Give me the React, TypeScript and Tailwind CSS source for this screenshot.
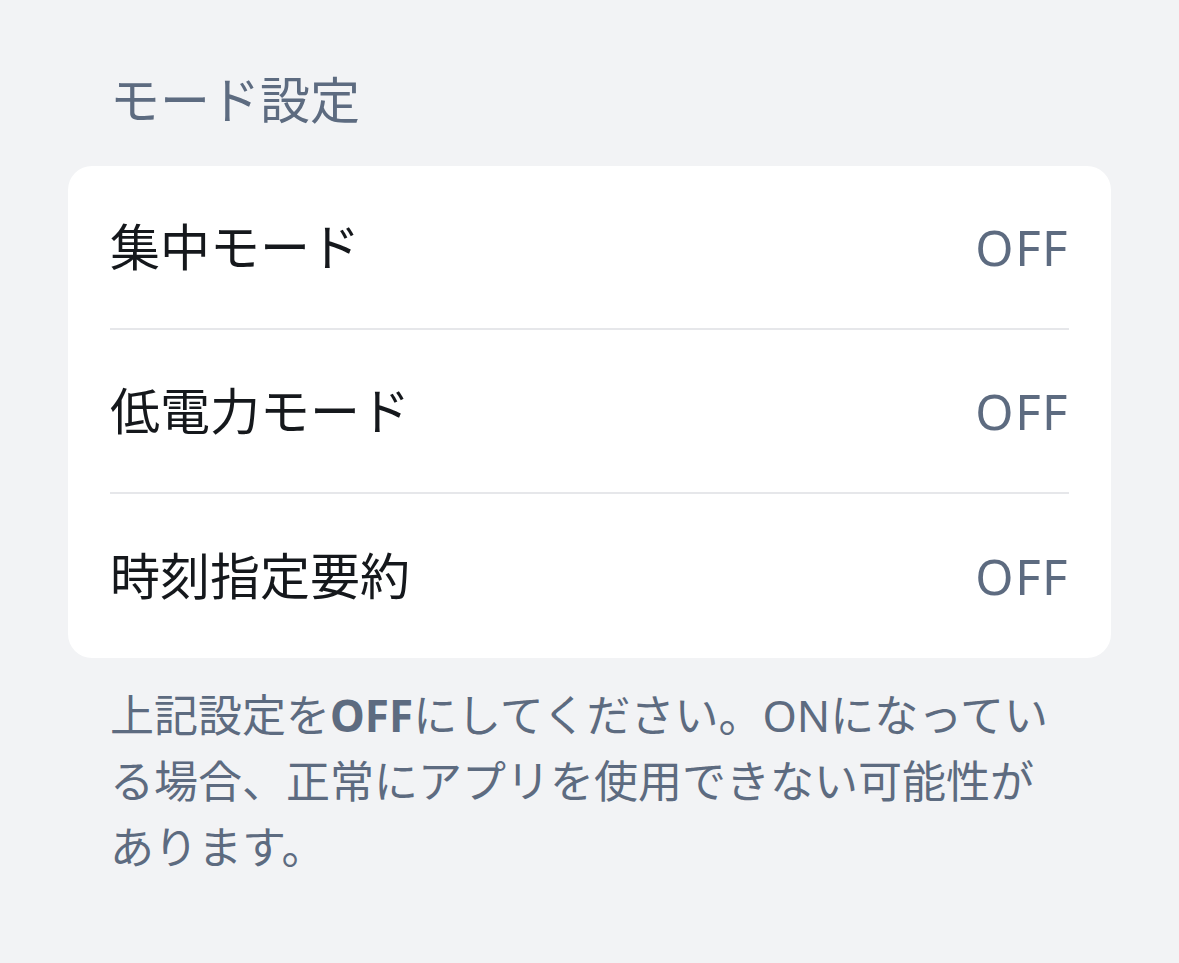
import React from "react";

const font = { fontFamily: '"Noto Sans", "Noto Sans CJK JP", sans-serif' };

function Row({ label, last }: { label: string; last?: boolean }) {
  return (
    <div className="px-[42px]">
      <div
        className={
          "flex h-[164px] items-center justify-between " +
          (last ? "" : "border-b-2 border-[#e6e7ea]")
        }
      >
        <span className="text-[50px] leading-none text-[#15181c]">{label}</span>
        <span className="text-[49px] leading-none tracking-[1.5px] text-[#5d6b80]">OFF</span>
      </div>
    </div>
  );
}

export default function App() {
  return (
    <div className="min-h-[963px] w-full bg-[#f2f3f5] px-[68px] pt-[64px]" style={font}>
      <h2 className="pl-[42px] text-[50px] font-normal leading-[72px] text-[#5d6b80]">
        モード設定
      </h2>
      <div className="mt-[30px] overflow-hidden rounded-[24px] bg-white">
        <Row label="集中モード" />
        <Row label="低電力モード" />
        <Row label="時刻指定要約" last />
      </div>
      <p className="mt-[24px] pl-[42px] pr-[42px] text-[44px] leading-[66px] text-[#5d6b80]">
        上記設定を<span className="font-bold">OFF</span>
        にしてください。ONになっている場合、正常にアプリを使用できない可能性があります。
      </p>
    </div>
  );
}
